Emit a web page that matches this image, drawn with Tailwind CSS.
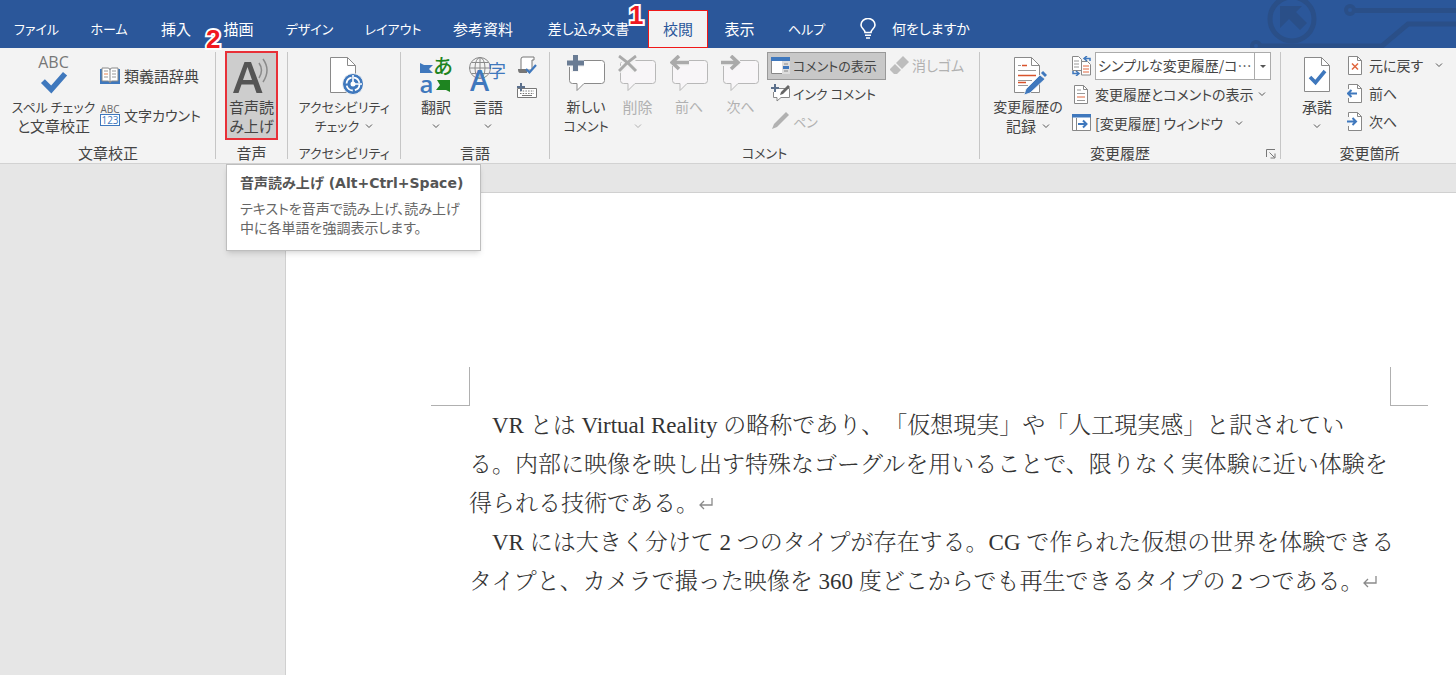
<!DOCTYPE html>
<html lang="ja">
<head>
<meta charset="utf-8">
<title>Word - 校閲</title>
<script src="https://cdn.jsdelivr.net/npm/@tailwindcss/browser@4"></script>
</head>
<body class="flex min-h-screen flex-col bg-[#e6e6e6] font-['Noto_Sans_CJK_JP',sans-serif] text-[15px] leading-[19px] text-[#444] [font-feature-settings:'palt']">

<header class="relative flex h-12 shrink-0 bg-[#2b579a] text-white">
  <svg class="absolute right-0 top-0" width="216" height="48" viewBox="0 0 216 48" fill="none" stroke="#2a4f88" stroke-width="5" aria-hidden="true">
    <circle cx="52" cy="19" r="22"/>
    <path d="M40 6h22l-6 6 11 11-7 7-11-11-9 9z" fill="#2a4f88" stroke="none"/>
    <circle cx="110" cy="10" r="4" stroke-width="4"/><path d="M115 10.500H216"/>
    <circle cx="16" cy="46" r="4" stroke-width="4"/><path d="M20 46h122l26-22h48"/>
  </svg>
  <nav class="flex pt-2.5" aria-label="リボン タブ">
    <button class="w-[73px] pb-0.5 whitespace-nowrap text-[13px]">ファイル</button>
    <button class="w-[72px] pb-0.5 whitespace-nowrap text-[13px]">ホーム</button>
    <button class="w-[62px] pb-0.5 whitespace-nowrap">挿入</button>
    <button class="w-[63px] pb-0.5 whitespace-nowrap">描画</button>
    <button class="w-[79px] pb-0.5 whitespace-nowrap text-[13px]">デザイン</button>
    <button class="w-[88px] pb-0.5 whitespace-nowrap text-[13px]">レイアウト</button>
    <button class="w-[92px] pb-0.5 whitespace-nowrap">参考資料</button>
    <button class="w-[119px] pb-0.5 whitespace-nowrap text-sm">差し込み文書</button>
    <button class="w-[60px] pb-0.5 whitespace-nowrap border border-[#f01818] bg-[#f3f3f3] text-[#2b579a]">校閲</button>
    <button class="w-[63px] pb-0.5 whitespace-nowrap">表示</button>
    <button class="w-[71px] pb-0.5 whitespace-nowrap text-[13px]">ヘルプ</button>
  </nav>
  <button class="flex items-center gap-4 pl-[18px] pt-2 whitespace-nowrap text-sm">
    <svg width="16" height="21" viewBox="0 0 16 21" fill="none" stroke="#fff" stroke-width="1.600" aria-hidden="true"><path d="M5 14.500c0-3-4-4-4-7.500a7 6.500 0 0 1 14 0c0 3.500-4 4.500-4 7.500zM5 17.300h6M6 20h4"/></svg>
    何をしますか
  </button>
  <span class="absolute left-[206px] top-[26px] z-10 font-['Liberation_Sans',sans-serif] text-[26px] font-bold leading-none text-[#f01820] [-webkit-text-stroke:4px_white] [paint-order:stroke_fill]">2</span>
  <span class="absolute left-[629px] top-0.5 z-10 font-['Liberation_Sans',sans-serif] text-[26px] font-bold leading-none text-[#f01820] [-webkit-text-stroke:4px_white] [paint-order:stroke_fill]">1</span>
</header>

<section class="relative flex h-[116px] shrink-0 border-b border-[#d2d2d2] bg-[#f3f3f3] whitespace-nowrap" aria-label="校閲">

  <div class="flex w-[216px] shrink-0 flex-col">
    <div class="flex h-[95px] gap-[5px] pl-3">
      <button class="flex w-[83px] flex-col items-center">
        <span class="flex h-[49px] flex-col items-center pt-[5px]">
          <span class="font-['Open_Sans',sans-serif] text-base leading-[18px] text-[#777]">ABC</span>
          <svg width="30" height="24" viewBox="0 0 30 26" fill="none" stroke="#3f78bd" stroke-width="6" aria-hidden="true"><path d="M3 11l9 9L27 3"/></svg>
        </span>
        <span class="text-[13px] leading-[19px]">スペル チェック</span>
        <span>と文章校正</span>
      </button>
      <div class="flex flex-col gap-[19px] pt-[18px]">
        <button class="flex items-center gap-1">
          <svg width="20" height="18" viewBox="0 0 20 18" aria-hidden="true"><path d="M0 2h20v15H0z" fill="#3f78bd"/><path d="M2 1h6q2 0 2 2 0-2 2-2h6v13h-6q-2 0-2 2 0-2-2-2H2z" fill="#fff" stroke="#888"/><path d="M10 3v12" stroke="#888"/><path d="M4 4h4M4 10h4M12 4h4M12 7h4M12 10h4" stroke="#999"/><path d="M4 7h4" stroke="#e8834f"/></svg>
          類義語辞典
        </button>
        <button class="flex items-center gap-1 text-sm leading-[19px]">
          <span class="flex w-5 flex-col items-center font-['Open_Sans',sans-serif] text-[10px] leading-[10px] text-[#666]"><span>ABC</span><span class="w-full border border-[#3f78bd] bg-white text-[#3f78bd]">123</span></span>
          文字カウント
        </button>
      </div>
    </div>
    <div class="text-center">文章校正</div>
  </div>

  <div class="my-1 w-px shrink-0 -ml-px bg-[#c6c6c6]"></div>
  <div class="flex w-[71px] shrink-0 flex-col">
    <div class="h-[95px] px-[9px] pt-[3px]">
      <button class="flex h-[89px] w-full flex-col items-center border-2 border-[#e83038] bg-[#cdcdcd]">
        <svg class="mt-1 mb-0.5" width="38" height="38" viewBox="0 0 38 38" aria-hidden="true"><path fill="#555" fill-rule="evenodd" d="M0 36 11.500 5h6.500l11.500 31h-6l-3-8.500H8.500L5.500 36zM10 23h9L14.500 10z"/><path d="M26 6q5 7 0 15M30 2q8 11 0 23" fill="none" stroke="#8a8a8a" stroke-width="1.500"/></svg>
        <span>音声読<br>み上げ</span>
      </button>
    </div>
    <div class="text-center">音声</div>
  </div>

  <div class="my-1 w-px shrink-0 bg-[#c6c6c6]"></div>
  <div class="flex w-28 shrink-0 flex-col">
    <div class="flex h-[95px] justify-center">
      <button class="flex flex-col items-center text-[13px] leading-[19px]">
        <svg class="mb-px mt-2" width="38" height="40" viewBox="0 0 38 40" aria-hidden="true"><path d="M5.500 1.500h17l8 8v27h-25z" fill="#fff" stroke="#8a8a8a"/><path d="M22.500 1.500v8h8" fill="none" stroke="#8a8a8a"/><circle cx="28" cy="28" r="10.500" fill="#3f78bd" stroke="#f3f3f3"/><circle cx="28" cy="28" r="6.500" fill="none" stroke="#fff" stroke-width="1.800" stroke-dasharray="8 2.200"/><path d="M28 19v9h9" fill="none" stroke="#fff" stroke-width="1.600"/><circle cx="28" cy="28" r="2.500" fill="#fff"/></svg>
        <span>アクセシビリティ</span>
        <span class="flex items-center gap-1.5">チェック<svg width="8" height="6" viewBox="0 0 8 6" fill="none" stroke="#555" aria-hidden="true"><path d="M1 1.500l3 3 3-3"/></svg></span>
      </button>
    </div>
    <div class="text-center text-[13px] leading-[19px]">アクセシビリティ</div>
  </div>

  <div class="my-1 w-px shrink-0 bg-[#c6c6c6]"></div>
  <div class="flex w-[148px] shrink-0 flex-col">
    <div class="flex h-[95px] pl-[9px]">
      <button class="flex w-[52px] flex-col items-center">
        <span class="grid h-[49px] grid-cols-[14px_19px] content-start justify-items-center pt-2 text-[20px] leading-[20px]">
          <svg class="mt-1.5" width="13" height="12" viewBox="0 0 13 12" aria-hidden="true"><path d="M0 1l4 2h9L9 7l4 4H0z" fill="#3f78bd"/></svg>
          <span class="font-medium text-[#1e8420]">あ</span>
          <span class="font-['Open_Sans',sans-serif] text-2xl leading-[16px] font-semibold text-[#3f78bd]">a</span>
          <svg class="mt-1" width="14" height="12" viewBox="0 0 14 12" aria-hidden="true"><path d="M1 0h13v12l-4-2H0l4-5z" fill="#1e8420"/></svg>
        </span>
        <span>翻訳</span>
        <svg class="mt-[7px]" width="8" height="6" viewBox="0 0 8 6" fill="none" stroke="#555" aria-hidden="true"><path d="M1 1.500l3 3 3-3"/></svg>
      </button>
      <button class="flex w-[52px] flex-col items-center">
        <span class="relative block h-[49px] w-10">
          <svg class="absolute left-0 top-2" width="24" height="24" viewBox="0 0 24 24" fill="none" stroke="#8a8a8a" aria-hidden="true"><circle cx="12" cy="12" r="10.500"/><ellipse cx="12" cy="12" rx="5" ry="10.500"/><path d="M12 1v22M1.500 12h21M3.500 6.500h17M3.500 17.500h17"/></svg>
          <span class="absolute left-0.5 top-[18px] font-['Open_Sans',sans-serif] text-[29px] leading-[28px] font-semibold text-[#3f78bd]">A</span>
          <span class="absolute left-5 top-3 text-[18px] leading-[20px] text-[#3f78bd]">字</span>
        </span>
        <span>言語</span>
        <svg class="mt-[7px]" width="8" height="6" viewBox="0 0 8 6" fill="none" stroke="#555" aria-hidden="true"><path d="M1 1.500l3 3 3-3"/></svg>
      </button>
      <div class="flex flex-col gap-2 pl-[3px] pt-2">
        <button aria-label="校正言語"><svg width="20" height="19" viewBox="0 0 20 19" aria-hidden="true"><path d="M4 13V3q0-2 2-2h11v3h-2v10H4" fill="#fff" stroke="#777"/><path d="M1 13h9v4H3q-2 0-2-4z" fill="#777"/><path d="M9 13l3.500 3.500L19 9" fill="none" stroke="#3f78bd" stroke-width="2.200"/></svg></button>
        <button aria-label="IME 辞書更新"><svg width="20" height="15" viewBox="0 0 20 15" aria-hidden="true"><path d="M.5 5.500h19v9H.5z" fill="#fff" stroke="#777"/><path d="M3 8h14M3 10.500h14" stroke="#777" stroke-dasharray="1.500 1.200"/><path d="M5 12.500h10" stroke="#777"/><path d="M4 0v8M0 4h8" stroke="#5c708c" stroke-width="2"/></svg></button>
      </div>
    </div>
    <div class="text-center">言語</div>
  </div>

  <div class="my-1 w-px shrink-0 bg-[#c6c6c6]"></div>
  <div class="flex w-[429px] shrink-0 flex-col">
    <div class="flex h-[95px] pl-2.5">
      <button class="flex w-[52px] flex-col items-center">
        <svg class="mb-[3px] mt-[7px]" width="39" height="39" viewBox="0 0 39 39" aria-hidden="true"><path d="M4.500 5.500h30q3 0 3 3v17q0 3-3 3H17l-7 7v-7H5.500q-3 0-3-3v-17z" fill="#fff" stroke="#8a8a8a"/><path d="M8 0v17M0 8.500h17" stroke="#f3f3f3" stroke-width="7"/><path d="M8.500 0v16M0 8h17" stroke="#6a7c94" stroke-width="5"/></svg>
        <span class="text-sm leading-[19px]">新しい</span>
        <span class="text-[13px] leading-[19px]">コメント</span>
      </button>
      <button class="flex w-[51px] flex-col items-center text-[#b1b1b1]" disabled>
        <svg class="mb-[3px] mt-[7px]" width="39" height="39" viewBox="0 0 39 39" aria-hidden="true"><path d="M4.500 5.500h30q3 0 3 3v17q0 3-3 3H17l-7 7v-7H5.500q-3 0-3-3v-17z" fill="#f8f6f8" stroke="#b8b8b8"/><path d="M1 1l17 15M18 1 1 16" stroke="#f3f3f3" stroke-width="6"/><path d="M1 1q9 6 17 15M18 1Q9 7 1 16" fill="none" stroke="#aaa" stroke-width="2.800"/></svg>
        <span>削除</span>
        <svg class="mt-[7px]" width="8" height="6" viewBox="0 0 8 6" fill="none" stroke="#b1b1b1" aria-hidden="true"><path d="M1 1.500l3 3 3-3"/></svg>
      </button>
      <button class="flex w-[52px] flex-col items-center text-[#b1b1b1]" disabled>
        <svg class="mb-[3px] mt-[7px]" width="39" height="39" viewBox="0 0 39 39" aria-hidden="true"><path d="M4.500 5.500h30q3 0 3 3v17q0 3-3 3H17l-7 7v-7H5.500q-3 0-3-3v-17z" fill="#f8f6f8" stroke="#b8b8b8"/><path d="M2 7.500h17" stroke="#f3f3f3" stroke-width="7"/><path d="M2 7.500h17M9 1 2 7.500 9 14" fill="none" stroke="#aaa" stroke-width="3.600"/></svg>
        <span class="text-sm leading-[19px]">前へ</span>
      </button>
      <button class="flex w-[51px] flex-col items-center text-[#b1b1b1]" disabled>
        <svg class="mb-[3px] mt-[7px]" width="39" height="39" viewBox="0 0 39 39" aria-hidden="true"><path d="M4.500 5.500h30q3 0 3 3v17q0 3-3 3H17l-7 7v-7H5.500q-3 0-3-3v-17z" fill="#f8f6f8" stroke="#b8b8b8"/><path d="M0 7.500h19" stroke="#f3f3f3" stroke-width="7"/><path d="M0 7.500h17M10 1l7 6.500L10 14" fill="none" stroke="#aaa" stroke-width="3.600"/></svg>
        <span class="text-sm leading-[19px]">次へ</span>
      </button>
      <div class="flex flex-col items-start pl-px pt-1 text-[13px]">
        <button class="flex h-7 w-[119px] items-center gap-[3px] border border-[#999] bg-[#c8c8c8] px-[3px] pb-px">
          <svg class="shrink-0" width="19" height="17" viewBox="0 0 19 17" aria-hidden="true"><path d="M.5.500h18v16H.5z" fill="#fff" stroke="#888"/><path d="M0 0h19v4H0z" fill="#3f78bd"/><path d="M11 4h8v13h-8z" fill="#ddd"/><path d="M13 7h4M13 14h4" stroke="#888"/><path d="M12 9h6v3h-6z" fill="#3f78bd"/></svg>
          コメントの表示
        </button>
        <button class="flex h-7 items-center gap-[3px] px-1 pb-0.5">
          <svg width="19" height="18" viewBox="0 0 19 18" aria-hidden="true"><path d="M8 4.500h10.500v9H10l-4 3.500v-3.500H2.500V8" fill="#fff" stroke="#888"/><path d="M4 0v8M0 4h8" stroke="#5c708c" stroke-width="2"/><path d="M9 11l1-3 7-7 2 2-7 7z" fill="#666"/></svg>
          インク コメント
        </button>
        <button class="flex h-7 items-center gap-[3px] px-1 pb-0.5 text-[#b1b1b1]" disabled>
          <svg width="19" height="18" viewBox="0 0 19 18" aria-hidden="true"><path d="M1 17l2-5L15 0l3 3L6 15z" fill="#b1b1b1"/></svg>
          ペン
        </button>
      </div>
      <button class="mt-1 flex h-7 items-center gap-[3px] pb-0.5 pl-1 text-sm text-[#b1b1b1]" disabled>
        <svg width="19" height="19" viewBox="0 0 19 19" aria-hidden="true"><path d="M6 7l7-7 6 6-7 7z" fill="#bdbdbd"/><path d="M5 8l6 6-4 4H4l-4-4v-1z" fill="#bdbdbd"/></svg>
        消しゴム
      </button>
    </div>
    <div class="text-center text-[13px] leading-[19px]">コメント</div>
  </div>

  <div class="my-1 w-px shrink-0 bg-[#c6c6c6]"></div>
  <div class="relative flex w-[300px] shrink-0 flex-col">
    <div class="flex h-[95px] gap-2 pl-3">
      <button class="flex w-[72px] flex-col items-center">
        <svg class="mb-px mt-2" width="38" height="40" viewBox="0 0 38 40" aria-hidden="true"><path d="M5.500 1.500h17l8 8v27h-25z" fill="#fff" stroke="#8a8a8a"/><path d="M22.500 1.500v8h8" fill="none" stroke="#8a8a8a"/><path d="M9 9.500h3M9 14.500h18M9 24.500h14M9 29.500h10" stroke="#999"/><path d="M13 9.500h5M9 19.500h18M9 26.500h8" stroke="#d9532c" stroke-width="1.300"/><path d="M15 39l2-6L31 19l5 4-15 14z" fill="#3f78bd" stroke="#f3f3f3" stroke-width=".8"/><path d="M33 16l4 4" stroke="#3f78bd" stroke-width="3"/></svg>
        <span class="text-sm leading-[19px]">変更履歴の</span>
        <span class="flex items-center gap-1.5">記録<svg width="8" height="6" viewBox="0 0 8 6" fill="none" stroke="#555" aria-hidden="true"><path d="M1 1.500l3 3 3-3"/></svg></span>
      </button>
      <div class="flex flex-col items-start gap-px pt-1 text-sm">
        <div class="flex h-7 items-center gap-1">
          <svg width="19" height="20" viewBox="0 0 19 20" aria-hidden="true"><path d="M.5.500h6l3 3v11h-9z" fill="#fff" stroke="#888"/><path d="M2 5h5M2 8h5M2 11h5" stroke="#999"/><path d="M9.500 5.500h6l3 3v10.500h-9z" fill="#fff" stroke="#888"/><path d="M11 10h6M11 13h6M11 16h6" stroke="#e0673f"/><path d="M18 5V2.500h-5M15 0l-3 2.500L15 5M1 15v2.500h5M4 15l3 2.500L4 20" fill="none" stroke="#3f78bd" stroke-width="1.500"/></svg>
          <div class="relative h-7 w-[176px] border border-[#ababab] bg-white">
            <select class="h-full w-full appearance-none overflow-hidden whitespace-nowrap bg-transparent pl-0.5 pr-4 pb-0.5 outline-none" aria-label="校閲用に表示"><option>シンプルな変更履歴/コ…</option></select>
            <span class="pointer-events-none absolute inset-y-0 right-0 flex w-4 items-center justify-center border-l border-[#ababab]"><svg width="6" height="3" viewBox="0 0 6 3" aria-hidden="true"><path d="M0 0h6L3 3z" fill="#555"/></svg></span>
          </div>
        </div>
        <button class="flex h-7 items-center gap-1 pb-0.5">
          <svg width="19" height="19" viewBox="0 0 19 19" aria-hidden="true"><path d="M2.500.500h9l4 4v14h-13z" fill="#fff" stroke="#888"/><path d="M11.500.500v4h4" fill="none" stroke="#888"/><path d="M5 5h4M5 8.500h8M5 15.500h8" stroke="#999"/><path d="M5 12h8" stroke="#e0673f"/></svg>
          変更履歴とコメントの表示
          <svg width="8" height="6" viewBox="0 0 8 6" fill="none" stroke="#555" aria-hidden="true"><path d="M1 1.500l3 3 3-3"/></svg>
        </button>
        <button class="flex h-7 items-center gap-1 pb-0.5">
          <svg width="19" height="18" viewBox="0 0 19 18" aria-hidden="true"><path d="M.5.500h18v16H.5z" fill="#fff" stroke="#888"/><path d="M0 0h19v3.500H0z" fill="#3f78bd"/><path d="M4.500 4v12" stroke="#888"/><path d="M6 10h8M11 6.500l3.500 3.500-3.500 3.500" fill="none" stroke="#3f78bd" stroke-width="2"/></svg>
          [変更履歴] ウィンドウ
          <svg class="ml-2" width="8" height="6" viewBox="0 0 8 6" fill="none" stroke="#555" aria-hidden="true"><path d="M1 1.500l3 3 3-3"/></svg>
        </button>
      </div>
    </div>
    <div class="pr-5 text-center">変更履歴</div>
    <button class="absolute bottom-1 right-1" aria-label="変更履歴オプション"><svg width="10" height="10" viewBox="0 0 10 10" fill="none" stroke="#777" aria-hidden="true"><path d="M.5 8V.5H9M3.500 3.500l5 5M9 4.500V9H4.500"/></svg></button>
  </div>

  <div class="my-1 w-px shrink-0 bg-[#c6c6c6]"></div>
  <div class="flex min-w-0 grow flex-col">
    <div class="flex h-[95px] pl-[10px]">
      <button class="flex w-[52px] flex-col items-center">
        <svg class="mb-px mt-2" width="28" height="40" viewBox="0 0 28 40" aria-hidden="true"><path d="M1.500 1.500h17l8 8v26h-25z" fill="#fff" stroke="#8a8a8a"/><path d="M18.500 1.500v8h8" fill="none" stroke="#8a8a8a"/><path d="M7 21l5.500 5.500L22 15" fill="none" stroke="#3f78bd" stroke-width="3.600"/></svg>
        <span>承諾</span>
        <svg class="mt-[7px]" width="8" height="6" viewBox="0 0 8 6" fill="none" stroke="#555" aria-hidden="true"><path d="M1 1.500l3 3 3-3"/></svg>
      </button>
      <div class="flex flex-col items-start pl-1 pt-[3px] text-sm">
        <button class="flex h-7 items-center gap-1.5">
          <svg width="16" height="19" viewBox="0 0 16 19" aria-hidden="true"><path d="M1.500.500h9l4 4v14h-13z" fill="#fff" stroke="#888"/><path d="M10.500.500v4h4" fill="none" stroke="#888"/><path d="M5 7.500l6 6M11 7.500l-6 6" stroke="#e0673f" stroke-width="1.500"/></svg>
          元に戻す
          <svg class="ml-1.5" width="8" height="6" viewBox="0 0 8 6" fill="none" stroke="#555" aria-hidden="true"><path d="M1 1.500l3 3 3-3"/></svg>
        </button>
        <button class="flex h-7 items-center gap-1.5">
          <svg width="16" height="19" viewBox="0 0 16 19" aria-hidden="true"><path d="M1.500.500h9l4 4v14h-13z" fill="#fff" stroke="#888"/><path d="M10.500.500v4h4" fill="none" stroke="#888"/><path d="M0 5h3v9H0z" fill="#f3f3f3"/><path d="M1 9.500h9M4.500 6 1 9.500 4.500 13" fill="none" stroke="#3f78bd" stroke-width="2"/></svg>
          前へ
        </button>
        <button class="flex h-7 items-center gap-1.5">
          <svg width="16" height="19" viewBox="0 0 16 19" aria-hidden="true"><path d="M1.500.500h9l4 4v14h-13z" fill="#fff" stroke="#888"/><path d="M10.500.500v4h4" fill="none" stroke="#888"/><path d="M0 5h3v9H0z" fill="#f3f3f3"/><path d="M0 9.500h9M5.500 6 9 9.500 5.500 13" fill="none" stroke="#3f78bd" stroke-width="2"/></svg>
          次へ
        </button>
      </div>
    </div>
    <div class="pl-0.5 text-center">変更箇所</div>
  </div>

  <div role="tooltip" class="absolute left-[226px] top-[116px] z-10 w-[255px] border border-[#bebebe] bg-white pb-[13px] pl-[13px] pt-2 text-[#666] shadow-md">
    <p class="font-['DejaVu_Sans','Noto_Sans_CJK_JP',sans-serif] text-sm leading-5 font-bold text-[#555]">音声読み上げ (Alt+Ctrl+Space)</p>
    <p class="mt-1.5 text-sm leading-[19px]">テキストを音声で読み上げ、読み上げ<br>中に各単語を強調表示します。</p>
  </div>
</section>

<main class="flex grow pl-[285px] pt-7">
  <article class="grow border-l border-t border-[#d0d0d0] bg-white pl-[145px] pr-7 pt-[174px]">
    <div class="flex justify-between" aria-hidden="true">
      <div class="h-[39px] w-[39px] border-b border-r border-[#b0b0b0]"></div>
      <div class="h-[39px] w-[38px] border-b border-l border-[#b0b0b0]"></div>
    </div>
    <div class="pl-[38px] font-['Liberation_Serif','Noto_Serif_CJK_JP','Noto_Sans_CJK_JP',serif] text-[23px] leading-[39px] font-light whitespace-nowrap text-[#333] [font-feature-settings:normal] [text-spacing-trim:space-all]">
      <p>　VR とは Virtual Reality の略称であり、「仮想現実」や「人工現実感」と訳されてい<br>る。内部に映像を映し出す特殊なゴーグルを用いることで、限りなく実体験に近い体験を<br>得られる技術である。<svg class="mb-1 inline-block" width="15" height="12" viewBox="0 0 15 12" fill="none" stroke="#8a8a8a" stroke-width="1.300" aria-hidden="true"><path d="M13 0v7H1M5 3 1 7l4 4"/></svg></p>
      <p>　VR には大きく分けて 2 つのタイプが存在する。CG で作られた仮想の世界を体験できる<br>タイプと、カメラで撮った映像を 360 度どこからでも再生できるタイプの 2 つである。<svg class="mb-1 inline-block" width="15" height="12" viewBox="0 0 15 12" fill="none" stroke="#8a8a8a" stroke-width="1.300" aria-hidden="true"><path d="M13 0v7H1M5 3 1 7l4 4"/></svg></p>
    </div>
  </article>
</main>
</body>
</html>
